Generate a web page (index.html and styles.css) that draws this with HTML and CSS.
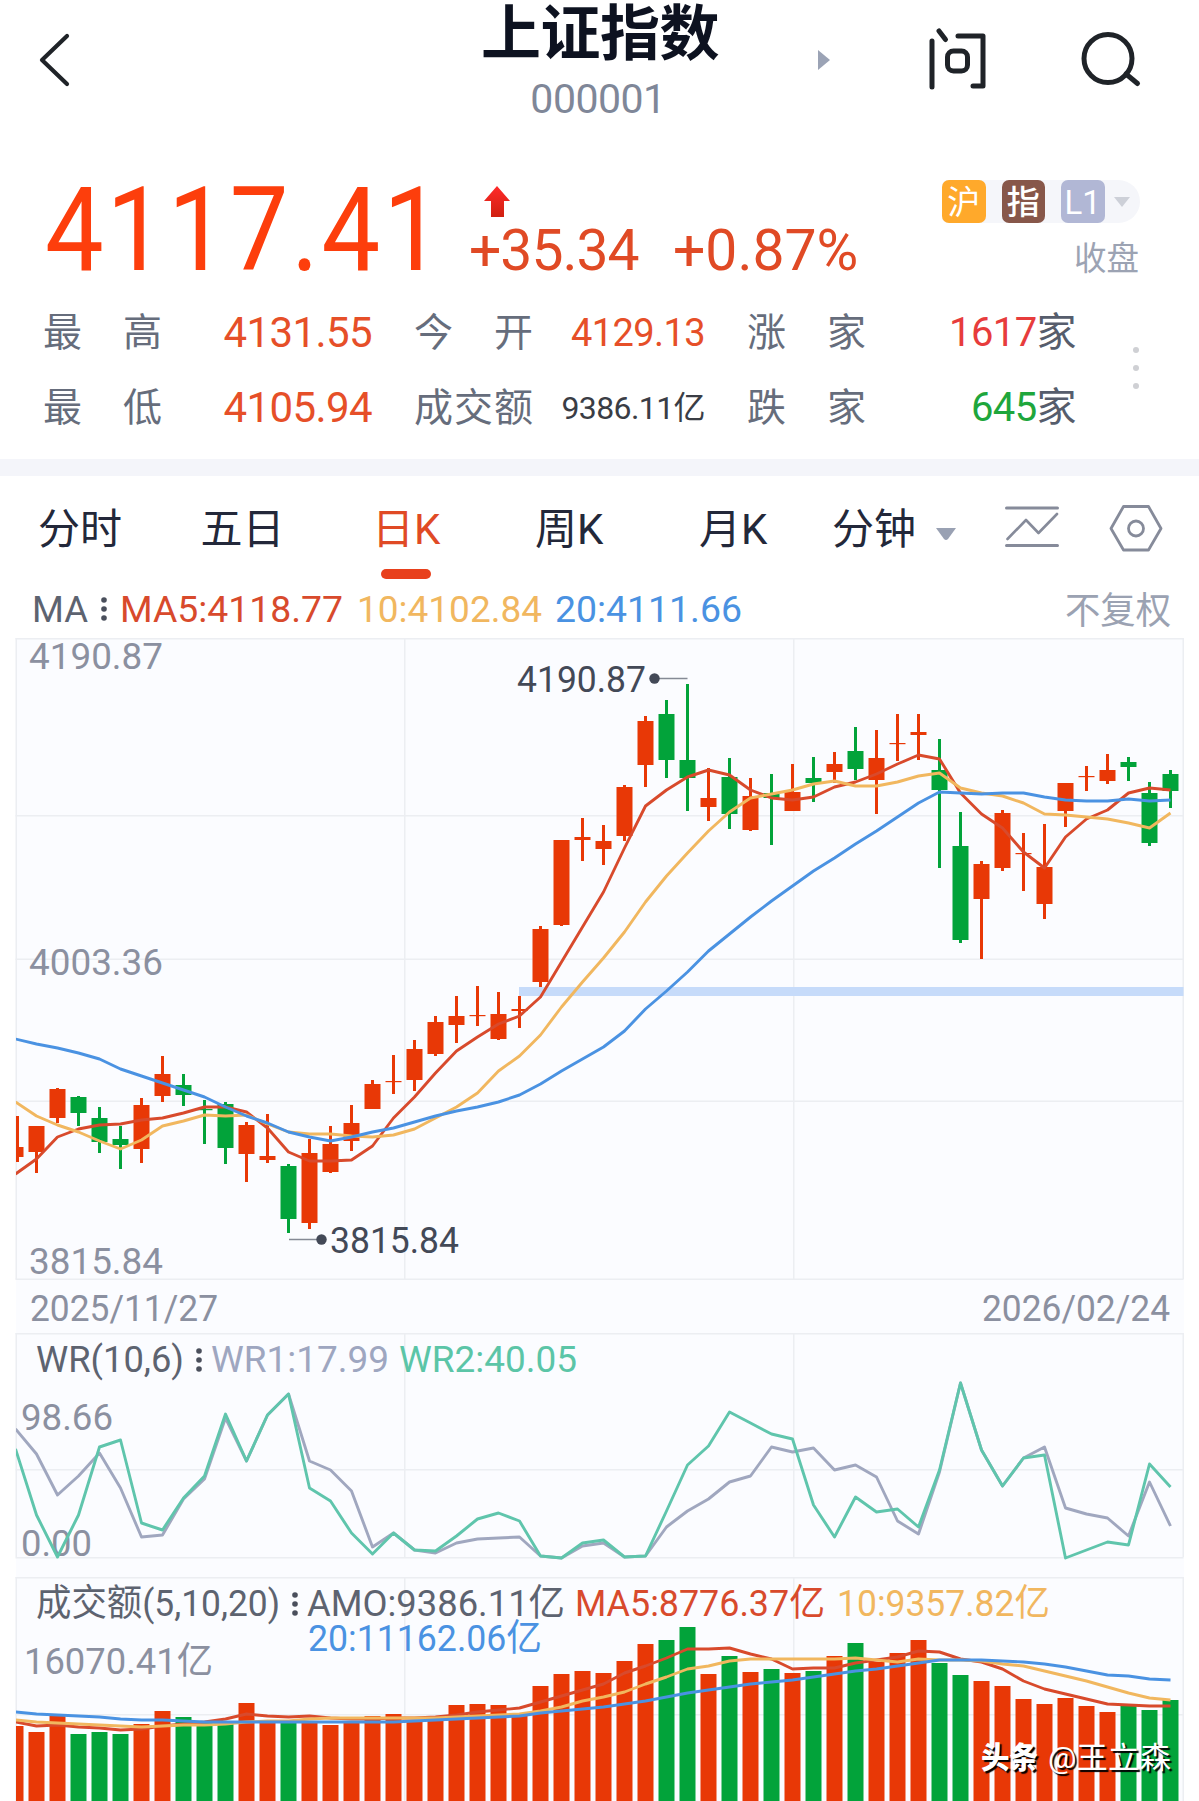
FILE: index.html
```
<!DOCTYPE html>
<html lang="zh-CN">
<head>
    <meta charset="utf-8">
    <title>上证指数 000001</title>
    <link rel="stylesheet" href="styles.css">
</head>
<body>
    <div class="page">
        <div class="header">
            <svg class="back-icon" width="40" height="60" viewBox="0 0 40 60">
                <path d="M33 6 L8 30 L33 54" />
            </svg>
            <div class="title-block">
                <h1>上证指数</h1>
                <div class="code">000001</div>
            </div>
            <svg class="next-icon" width="14" height="22" viewBox="0 0 14 22">
                <path d="M1 1 L13 11 L1 21 Z" />
            </svg>
            <svg class="ask-icon" width="60" height="64" viewBox="0 0 60 64">
                <path d="M6 15 V61 M13 5 L19.5 13.5 M32 10 H57 V60 H47" />
                <rect x="21.5" y="25" width="20" height="20" rx="6" />
            </svg>
            <svg class="search-icon" width="62" height="60" viewBox="0 0 62 60">
                <circle cx="28" cy="28.5" r="24" />
                <path d="M46 44 L57.5 53.5" />
            </svg>
        </div>

        <div class="quote">
            <div class="price"><span>4117.41</span></div>
            <div class="change">
                <svg class="up-icon" width="28" height="34" viewBox="0 0 28 34">
                    <defs>
                        <linearGradient id="up" x1="0" y1="0" x2="0" y2="1">
                            <stop offset="0" stop-color="#ff2a2a" />
                            <stop offset="1" stop-color="#d02010" />
                        </linearGradient>
                    </defs>
                    <path d="M14 1 L27 16 H21 V32 H8 V16 H1 Z" fill="url(#up)" />
                </svg>
                <div class="change-values">
                    <span class="diff">+35.34</span>
                    <span class="percent">+0.87%</span>
                </div>
            </div>
            <div class="status">
                <div class="badges">
                    <span class="badge orange">沪</span>
                    <span class="badge brown">指</span>
                    <span class="badge purple">L1</span>
                    <svg width="18" height="12" viewBox="0 0 18 12"><path d="M1 1 H17 L9 11 Z" fill="#cdd0d8" /></svg>
                </div>
                <div class="closed">收盘</div>
            </div>
        </div>

        <div class="stats">
            <div class="label"><span>最</span><span>高</span></div>
            <div class="value red">4131.55</div>
            <div class="label"><span>今</span><span>开</span></div>
            <div class="value mid red">4129.13</div>
            <div class="label"><span>涨</span><span>家</span></div>
            <div class="value"><span class="crimson">1617</span>家</div>
            <div class="label"><span>最</span><span>低</span></div>
            <div class="value red">4105.94</div>
            <div class="label"><span>成</span><span>交</span><span>额</span></div>
            <div class="value small">9386.11亿</div>
            <div class="label"><span>跌</span><span>家</span></div>
            <div class="value"><span class="green">645</span>家</div>
            <div class="more"><i></i><i></i><i></i></div>
        </div>

        <div class="divider"></div>

        <div class="tabs">
            <span class="tab">分时</span>
            <span class="tab">五日</span>
            <span class="tab active">日K</span>
            <span class="tab">周K</span>
            <span class="tab">月K</span>
            <span class="tab last">分钟</span>
            <svg class="caret" width="20" height="13" viewBox="0 0 20 13"><path d="M0 0 H20 L12 11 Q10 13 8 11 Z" /></svg>
            <svg class="line-icon" width="56" height="44" viewBox="0 0 56 44">
                <path d="M2.5 4 H53.5 M2.5 41.5 H53.5" stroke-width="3" />
                <path d="M3.5 35 L22 16 L34.5 29 L53 10" stroke-width="2.6" />
            </svg>
            <svg class="gear-icon" width="54" height="48" viewBox="0 0 54 48">
                <path d="M14.5 2.5 H39.5 L52 24.500 L39.5 46 H14.5 L2 24.500 Z" />
                <circle cx="27" cy="24.5" r="7.5" />
            </svg>
        </div>

        <svg id="chart" class="chart" width="1199" height="1211" viewBox="0 590 1199 1211"></svg>
    </div>

    <script src="chart.js"></script>
</body>
</html>
```
FILE: styles.css
```
body {
    margin: 0;
    background-color: #fff;
    font-family: Roboto, "Noto Sans CJK SC", sans-serif;
    color: #23283a;
}

.page {
    width: 1199px;
    height: 1801px;
    overflow: hidden;
    display: flex;
    flex-direction: column;
}

.header {
    height: 130px;
    display: flex;
    align-items: flex-start;
    flex-shrink: 0;
}

.header svg {
    flex-shrink: 0;
    fill: none;
    stroke: #1f2328;
    stroke-width: 5;
    stroke-linecap: round;
    stroke-linejoin: round;
}

.header .back-icon {
    margin: 30px 0 0 34px;
    stroke-width: 4.2;
}

.title-block {
    width: 260px;
    margin-left: 396px;
    text-align: center;
}

.title-block h1 {
    margin: 0;
    font-size: 60px;
    line-height: 70px;
    font-weight: 700;
    color: #0d1220;
    letter-spacing: -0.5px;
}

.code {
    font-size: 41px;
    line-height: 44px;
    margin-top: 7px;
    color: #7f8798;
    letter-spacing: -0.5px;
    margin-left: -4px;
}

.header .next-icon {
    margin: 49px 0 0 87px;
    fill: #9ba3b5;
    stroke: none;
}

.ask-icon {
    margin: 26px 0 0 95px;
}

.search-icon {
    margin: 30px 0 0 94px;
}

.quote {
    height: 165px;
    display: flex;
    flex-shrink: 0;
    padding-left: 45px;
}

.price {
    width: 424px;
    margin-top: 43px;
    font-size: 116px;
    line-height: 114px;
    letter-spacing: 3.2px;
    color: #fd3e0c;
}

.price span {
    display: inline-block;
    transform: scaleX(0.9);
    transform-origin: left;
}

.change {
    width: 473px;
    padding-top: 55px;
}

.up-icon {
    display: block;
    margin-left: 14px;
}

.change-values {
    display: flex;
    font-size: 57px;
    line-height: 64px;
    color: #e04a25;
    white-space: nowrap;
}

.diff {
    width: 204px;
    letter-spacing: -1px;
}

.status {
    padding-top: 50px;
    width: 198px;
}

.badges {
    display: flex;
    align-items: center;
    gap: 16px;
    height: 43px;
    border-radius: 6px 22px 22px 6px;
    background-color: #f5f6fa;
}

.badges svg {
    margin-left: -8px;
}

.badge {
    width: 43.5px;
    height: 43px;
    border-radius: 7px;
    font-size: 33px;
    line-height: 45px;
    text-align: center;
    color: #fff;
}

.orange {
    background-color: #ffa92b;
}

.brown {
    background-color: #87574a;
    font-weight: 500;
}

.purple {
    background-color: #b1b7d5;
}

.closed {
    margin-top: 15px;
    margin-right: 1px;
    font-size: 32.5px;
    line-height: 42px;
    text-align: right;
    color: #9ca3b3;
}

.stats {
    height: 164px;
    box-sizing: border-box;
    flex-shrink: 0;
    position: relative;
    display: grid;
    grid-template-columns: 119px 252px 119px 214px 119px 210px;
    grid-template-rows: 76px 73px;
    align-items: center;
    padding-left: 43px;
}

.label {
    display: flex;
    justify-content: space-between;
    font-size: 39px;
    line-height: 74px;
    color: #666d7c;
}

.value {
    padding-right: 42px;
    font-size: 42px;
    line-height: 74px;
    letter-spacing: -0.6px;
    text-align: right;
    white-space: nowrap;
    color: #565d6c;
}

.stats .value:nth-child(6n) {
    padding-right: 0;
    font-size: 40px;
}

.value.mid {
    font-size: 38px;
}

.value.small {
    font-size: 32px;
    color: #3a3d45;
}

.value.red {
    color: #e64f28;
}

.crimson {
    color: #e73c3c;
}

.green {
    color: #1ea63c;
}

/* three dots sit beside both rows */
.more {
    position: absolute;
    left: 1133px;
    top: 52px;
    display: flex;
    flex-direction: column;
    gap: 12px;
}

.more i {
    width: 6px;
    height: 6px;
    border-radius: 50%;
    background-color: #cfd0d4;
}

.divider {
    height: 17px;
    flex-shrink: 0;
    background-color: #f4f5fa;
}

.tabs {
    height: 114px;
    flex-shrink: 0;
    display: flex;
    align-items: flex-start;
    padding-left: 38px;
    font-size: 42px;
    line-height: 107px;
    color: #23283a;
}

.tab {
    width: 162.5px;
}

.tab.active {
    position: relative;
    width: 163px;
    margin-left: 9px;
    color: #e04a25;
}

.tab.active::after {
    content: "";
    position: absolute;
    left: 9px;
    top: 93px;
    width: 50px;
    height: 10px;
    border-radius: 5px;
    background-color: #e8401c;
}

.tab.active + .tab {
    width: 164px;
}

.tab.active + .tab + .tab {
    width: 133px;
}

.tab.last {
    width: 104px;
}

.caret {
    margin-top: 52px;
    fill: #99a1b3;
}

.line-icon,
.gear-icon {
    fill: none;
    stroke: #868b9a;
    stroke-linecap: round;
    stroke-linejoin: round;
}

.line-icon {
    margin: 28px 0 0 48px;
}

.gear-icon {
    margin: 28px 0 0 49px;
    stroke-width: 2.8;
}

.chart {
    display: block;
    flex-shrink: 0;
}

.chart text {
    font-size: 37px;
}

.chart .ma {
    fill: none;
    stroke-width: 2.9;
    stroke-linejoin: round;
}

.chart .watermark {
    font-size: 30px;
    fill: #fff;
    text-shadow: 2px 2px 1px #000;
}

.chart .bold {
    font-weight: 900;
}
```
FILE: chart.js
```
const chart = document.getElementById('chart');

const RED = '#e83806';
const GREEN = '#02a33a';
const LINE_RED = '#d84a2c';
const LINE_YELLOW = '#f1b75f';
const LINE_BLUE = '#4a92e2';
const GRID = '#eceef2';
const GRAY = '#8b90a0';
const DARK = '#5d6370';

// [direction, high, body top, body bottom, low]
const candles = [
    [1, 1116, 1147, 1157, 1162], [1, 1126, 1126, 1152, 1173], [1, 1088, 1089, 1118, 1123], [0, 1096, 1097, 1113, 1126],
    [0, 1107, 1118, 1142, 1153], [0, 1126, 1139, 1145, 1169], [1, 1098, 1105, 1149, 1163], [1, 1056, 1074, 1096, 1102],
    [0, 1074, 1085, 1095, 1106], [0, 1100, 1109, 1110, 1144], [0, 1102, 1104, 1148, 1164], [1, 1122, 1125, 1154, 1182],
    [1, 1114, 1156, 1160, 1163], [0, 1164, 1166, 1219, 1233], [1, 1139, 1153, 1223, 1229], [1, 1126, 1144, 1172, 1173],
    [1, 1105, 1123, 1141, 1151], [1, 1080, 1084, 1109, 1109], [1, 1055, 1081, 1082, 1094], [1, 1040, 1049, 1080, 1091],
    [1, 1016, 1022, 1054, 1056], [1, 996, 1016, 1025, 1043], [1, 986, 1015, 1016, 1026], [1, 992, 1014, 1039, 1040],
    [1, 996, 1009, 1011, 1028], [1, 926, 929, 982, 987], [1, 840, 840, 925, 926], [1, 818, 837, 840, 861],
    [1, 825, 841, 849, 865], [1, 785, 787, 836, 841], [1, 716, 721, 765, 787], [0, 700, 714, 760, 778],
    [0, 684, 760, 778, 811], [1, 768, 798, 807, 821], [0, 758, 777, 814, 829], [1, 778, 796, 830, 831],
    [0, 774, 793, 798, 845], [1, 764, 792, 811, 811], [0, 757, 778, 783, 802], [1, 752, 764, 772, 783],
    [0, 727, 751, 769, 780], [1, 730, 758, 780, 814], [1, 714, 743, 744, 761], [1, 714, 732, 735, 760],
    [0, 739, 770, 790, 868], [0, 812, 846, 940, 943], [1, 861, 864, 899, 959], [1, 810, 813, 868, 871],
    [1, 833, 853, 854, 891], [1, 824, 867, 904, 919], [1, 783, 783, 811, 827], [1, 766, 776, 777, 791],
    [1, 754, 770, 781, 784], [0, 757, 762, 767, 781], [0, 782, 793, 843, 846], [0, 770, 774, 791, 808]
];

const ma5 = [1174, 1159, 1137, 1129, 1125, 1124, 1120, 1118, 1113, 1107, 1107, 1112, 1128, 1152, 1161, 1161, 1160, 1146, 1118, 1097, 1073, 1051, 1037, 1024, 1016, 997, 962, 927, 892, 848, 806, 790, 777, 770, 775, 790, 798, 800, 797, 787, 782, 774, 764, 755, 759, 793, 814, 828, 852, 868, 837, 819, 810, 793, 788, 790];
const ma10 = [1102, 1116, 1125, 1132, 1141, 1149, 1140, 1126, 1121, 1115, 1116, 1115, 1124, 1132, 1134, 1134, 1136, 1137, 1135, 1129, 1118, 1107, 1093, 1071, 1056, 1035, 1007, 982, 958, 932, 902, 876, 853, 831, 812, 798, 794, 790, 784, 781, 786, 786, 782, 776, 773, 788, 793, 796, 803, 814, 815, 817, 819, 823, 828, 813];
const ma20 = [1039, 1044, 1048, 1053, 1059, 1069, 1076, 1083, 1090, 1097, 1107, 1116, 1123, 1132, 1137, 1141, 1137, 1132, 1128, 1122, 1116, 1111, 1107, 1102, 1095, 1084, 1071, 1059, 1047, 1031, 1009, 991, 972, 951, 934, 917, 901, 886, 871, 858, 844, 831, 817, 803, 792, 793, 794, 793, 793, 797, 800, 801, 801, 799, 801, 800];

const wr1 = [1429, 1454, 1495, 1476, 1453, 1488, 1537, 1535, 1499, 1479, 1418, 1461, 1415, 1394, 1461, 1470, 1491, 1547, 1533, 1550, 1553, 1543, 1539, 1538, 1537, 1556, 1558, 1546, 1543, 1557, 1556, 1527, 1511, 1499, 1482, 1476, 1447, 1452, 1448, 1470, 1465, 1477, 1521, 1534, 1472, 1383, 1450, 1486, 1458, 1447, 1508, 1514, 1518, 1536, 1482, 1526];
const wr2 = [1449, 1515, 1557, 1515, 1447, 1440, 1523, 1530, 1498, 1476, 1414, 1461, 1415, 1394, 1488, 1501, 1533, 1554, 1533, 1550, 1551, 1536, 1519, 1513, 1521, 1556, 1558, 1543, 1540, 1557, 1556, 1511, 1465, 1446, 1412, 1423, 1434, 1439, 1505, 1537, 1497, 1512, 1509, 1527, 1470, 1383, 1450, 1486, 1458, 1455, 1558, 1550, 1542, 1545, 1464, 1487];

const amounts = [1726, 1732, 1715, 1734, 1732, 1734, 1724, 1711, 1717, 1721, 1721, 1703, 1720, 1723, 1721, 1725, 1721, 1716, 1714, 1722, 1721, 1705, 1704, 1705, 1715, 1686, 1674, 1671, 1673, 1661, 1644, 1640, 1627, 1674, 1656, 1672, 1669, 1673, 1671, 1656, 1643, 1662, 1653, 1640, 1663, 1675, 1681, 1686, 1699, 1704, 1698, 1706, 1712, 1706, 1710, 1700];
const amo5 = [1722, 1726, 1725, 1727, 1728, 1730, 1729, 1726, 1724, 1722, 1719, 1714, 1716, 1717, 1716, 1718, 1719, 1719, 1718, 1718, 1717, 1715, 1712, 1710, 1708, 1702, 1696, 1690, 1684, 1673, 1666, 1658, 1649, 1649, 1648, 1654, 1659, 1669, 1668, 1668, 1663, 1660, 1657, 1651, 1652, 1659, 1662, 1669, 1681, 1689, 1694, 1699, 1704, 1705, 1706, 1706];
const amo10 = [1720, 1722, 1723, 1724, 1725, 1726, 1727, 1726, 1725, 1725, 1724, 1722, 1721, 1721, 1719, 1718, 1718, 1718, 1718, 1718, 1718, 1717, 1716, 1715, 1714, 1711, 1707, 1701, 1697, 1692, 1684, 1677, 1669, 1666, 1661, 1659, 1659, 1659, 1659, 1659, 1658, 1660, 1662, 1659, 1660, 1660, 1661, 1664, 1666, 1671, 1676, 1681, 1687, 1693, 1698, 1700];
const amo20 = [1712, 1714, 1715, 1716, 1717, 1719, 1720, 1720, 1721, 1722, 1722, 1722, 1722, 1722, 1722, 1722, 1722, 1722, 1722, 1721, 1720, 1719, 1718, 1717, 1716, 1713, 1711, 1709, 1707, 1704, 1701, 1697, 1693, 1690, 1687, 1684, 1682, 1680, 1677, 1674, 1671, 1669, 1666, 1663, 1660, 1660, 1660, 1661, 1662, 1664, 1667, 1671, 1675, 1676, 1679, 1680];

let out = '';

function xAt(i) {
    return 15.5 + i * 21;
}

function rect(x, y, w, h, fill) {
    out += `<rect x="${x}" y="${y}" width="${w}" height="${h}" fill="${fill}" />`;
}

function hline(y) {
    rect(15.5, y, 1168, 1.5, GRID);
}

function vlines(top, bottom) {
    [15.5, 404, 793, 1182.5].forEach(x => rect(x, top, 1.5, bottom - top, GRID));
}

function line(values, color) {
    const points = values.map((y, i) => `${xAt(i)},${y}`).join(' ');
    out += `<polyline class="ma" clip-path="url(#plot)" points="${points}" stroke="${color}" />`;
}

// left and right are the edges the label has to fill
function label(text, left, right, y, color, cls) {
    out += `<text class="${cls || ''}" x="${left - 1}" y="${y}" textLength="${right - left + 2}" lengthAdjust="spacingAndGlyphs" fill="${color}">${text}</text>`;
}

function dots(x, y) {
    [-9, 0, 9].forEach(d => {
        out += `<circle cx="${x}" cy="${y + d}" r="2.8" fill="#4a4f5c" />`;
    });
}

out += '<defs><clipPath id="plot"><rect x="16" y="600" width="1168" height="1201" /></clipPath></defs>';

// panels
rect(16, 638, 1168, 1163, '#fbfcff');
[638, 815, 958.5, 1100.5, 1278.5, 1333, 1469, 1557, 1577, 1714].forEach(hline);
vlines(638, 1279);
vlines(1333, 1557);
vlines(1577, 1801);

// axis labels
label('4190.87', 30, 162, 669, GRAY);
label('4003.36', 30, 162, 975, GRAY);
label('3815.84', 30, 162, 1274, GRAY);
label('2025/11/27', 31, 217, 1321, GRAY);
label('2026/02/24', 983, 1169, 1321, GRAY);
label('98.66', 22, 112, 1430, GRAY);
label('0.00', 22, 91, 1556, GRAY);
label('16070.41亿', 25, 212, 1674, GRAY);

// price pane
rect(519, 987, 664.5, 9, '#c6dbfa');
candles.forEach(([up, high, top, bottom, low], i) => {
    const color = up ? RED : GREEN;
    const x = xAt(i);
    const left = Math.max(x - 8, 16);
    rect(Math.max(x - 1.5, 16), high, 3, low - high, color);
    rect(left, top, x + 8 - left, Math.max(bottom - top, 1.2), color);
});
line(ma5, LINE_RED);
line(ma10, LINE_YELLOW);
line(ma20, LINE_BLUE);

label('4190.87', 518, 645, 692, '#434957');
label('3815.84', 331, 458, 1253, '#434957');
out += '<path d="M654 678.5 H687.5 M289 1239.5 H321" stroke="#858a95" stroke-width="1.5" />';
out += '<circle cx="654.5" cy="678.5" r="5.2" fill="#434957" /><circle cx="321.5" cy="1239.5" r="5.2" fill="#434957" />';

// legends
label('MA', 33, 87, 622, DARK);
dots(104, 609);
label('MA5:4118.77', 121, 342, 622, LINE_RED);
label('10:4102.84', 358, 541, 622, LINE_YELLOW);
label('20:4111.66', 556, 741, 622, LINE_BLUE);
label('不复权', 1066, 1170, 624, '#9ba2b2');

label('WR(10,6)', 37, 183, 1372, DARK);
dots(199, 1360);
label('WR1:17.99', 212, 388, 1372, '#9ea6c0');
label('WR2:40.05', 400, 576, 1372, '#5bc5a7');

label('成交额(5,10,20)', 37, 279, 1616, DARK);
dots(295, 1604);
label('AMO:9386.11亿', 308, 564, 1616, DARK);
label('MA5:8776.37亿', 576, 824, 1616, LINE_RED);
label('10:9357.82亿', 838, 1049, 1616, LINE_YELLOW);
label('20:11162.06亿', 309, 541, 1651, LINE_BLUE);

line(wr1, '#a0a7bf');
line(wr2, '#5fc5ac');

// amount bars
amounts.forEach((top, i) => {
    const left = Math.max(xAt(i) - 8, 16);
    rect(left, top, xAt(i) + 8 - left, 1801 - top, candles[i][0] ? RED : GREEN);
});
line(amo5, LINE_RED);
line(amo10, LINE_YELLOW);
line(amo20, LINE_BLUE);

label('头条', 982, 1037, 1768, '#fff', 'watermark bold');
label('@王立森', 1049, 1170, 1768, '#fff', 'watermark');

chart.innerHTML = out;
```
